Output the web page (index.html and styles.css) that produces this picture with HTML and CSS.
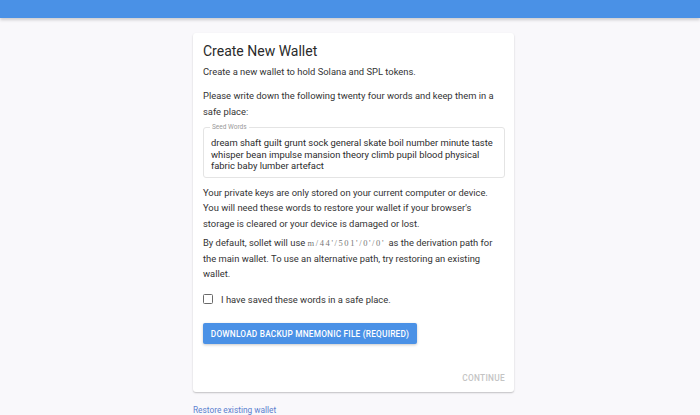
FILE: index.html
```html
<!DOCTYPE html>
<html>
<head>
<meta charset="utf-8">
<link rel="stylesheet" href="styles.css">
</head>
<body>
<header class="appbar"></header>
<main class="page">
  <div class="column">
    <section class="card">
      <h1 class="title">Create New Wallet</h1>
      <p class="text p1">Create a new wallet to hold Solana and SPL tokens.</p>
      <p class="text p2">Please write down the following twenty four words and keep them in a safe place:</p>
      <fieldset class="seed">
        <legend>Seed Words</legend>
        <div class="seed-text">dream shaft guilt grunt sock general skate boil number minute taste whisper bean impulse mansion theory climb pupil blood physical fabric baby lumber artefact</div>
      </fieldset>
      <p class="text p3">Your private keys are only stored on your current computer or device. You will need these words to restore your wallet if your browser's storage is cleared or your device is damaged or lost.</p>
      <p class="text p4">By default, sollet will use <code>m/44'/501'/0'/0'</code> as the derivation path for the main wallet. To use an alternative path, try restoring an existing wallet.</p>
      <label class="check-row"><span class="box"></span><span>I have saved these words in a safe place.</span></label>
      <button class="btn-primary">Download Backup Mnemonic File (Required)</button>
      <div class="actions"><span class="btn-text">Continue</span></div>
    </section>
    <a class="restore">Restore existing wallet</a>
  </div>
</main>
</body>
</html>
```
FILE: styles.css
```css
html, body {
  margin: 0;
  padding: 0;
}
body {
  background: #f9f8fb;
  font-family: Roboto, "Liberation Sans", sans-serif;
  color: #2b2b2b;
  height: 415px;
  overflow: hidden;
}
.appbar {
  height: 18px;
  background: #4a91e6;
  box-shadow: 0 2px 3px rgba(0, 0, 0, 0.18);
}
.page {
  display: flex;
  justify-content: center;
  padding-left: 7px;
}
.column {
  width: 321px;
  margin-top: 15px;
  display: flex;
  flex-direction: column;
}
.card {
  background: #fff;
  border-radius: 3px;
  box-shadow: 0 1px 2px rgba(0, 0, 0, 0.18), 0 1px 1px rgba(0, 0, 0, 0.06);
  padding: 10px 9px 7px 10px;
  display: flex;
  flex-direction: column;
}
.title {
  margin: 0 0 5px;
  font-size: 14px;
  font-weight: 400;
  line-height: 16px;
  color: #2a2a2a;
}
.text {
  margin: 0;
  font-size: 9.4px;
  line-height: 15.5px;
  color: #333;
}
.p2 { margin-top: 8.5px; }
.p3 { margin-top: 7px; }
.p4 {
  margin-top: 4px;
  line-height: 15px;
}
code {
  font-family: "Liberation Serif", serif;
  font-size: 8.5px;
  color: #777;
  letter-spacing: 1.6px;
  margin-right: 1px;
}
.seed {
  margin: 5px 0 0;
  border: 1px solid #e4e4e4;
  border-radius: 3px;
  padding: 8px 8px 5px 7px;
  min-width: 0;
}
.seed legend {
  font-size: 6.5px;
  color: #999;
  padding: 0 2px;
  margin-left: -1px;
  line-height: 7px;
}
.seed-text {
  font-size: 9.4px;
  line-height: 11.5px;
  color: #2b2b2b;
  margin-top: -2px;
}
.check-row {
  display: flex;
  align-items: center;
  gap: 8px;
  margin-top: 11px;
  font-size: 9.4px;
  color: #333;
  height: 14px;
}
.box {
  width: 8px;
  height: 8px;
  border: 1.5px solid #6a6a6a;
  border-radius: 1.5px;
  flex: none;
}
.btn-primary {
  align-self: flex-start;
  margin-top: 17px;
  width: 214px;
  height: 21px;
  border: none;
  border-radius: 2px;
  background: #4a91e6;
  color: #fff;
  font-family: Roboto, "Liberation Sans", sans-serif;
  font-size: 8.3px;
  font-weight: 500;
  text-transform: uppercase;
  letter-spacing: 0.2px;
  box-shadow: 0 1px 3px rgba(0, 0, 0, 0.22);
  padding: 0;
}
.actions {
  display: flex;
  justify-content: flex-end;
  margin-top: 27px;
}
.btn-text {
  font-size: 8.3px;
  font-weight: 500;
  text-transform: uppercase;
  letter-spacing: 0.3px;
  color: #c4c4c4;
  line-height: 14px;
}
.restore {
  margin-top: 12px;
  font-size: 8.3px;
  color: #5b80cf;
  line-height: 12px;
}
```
